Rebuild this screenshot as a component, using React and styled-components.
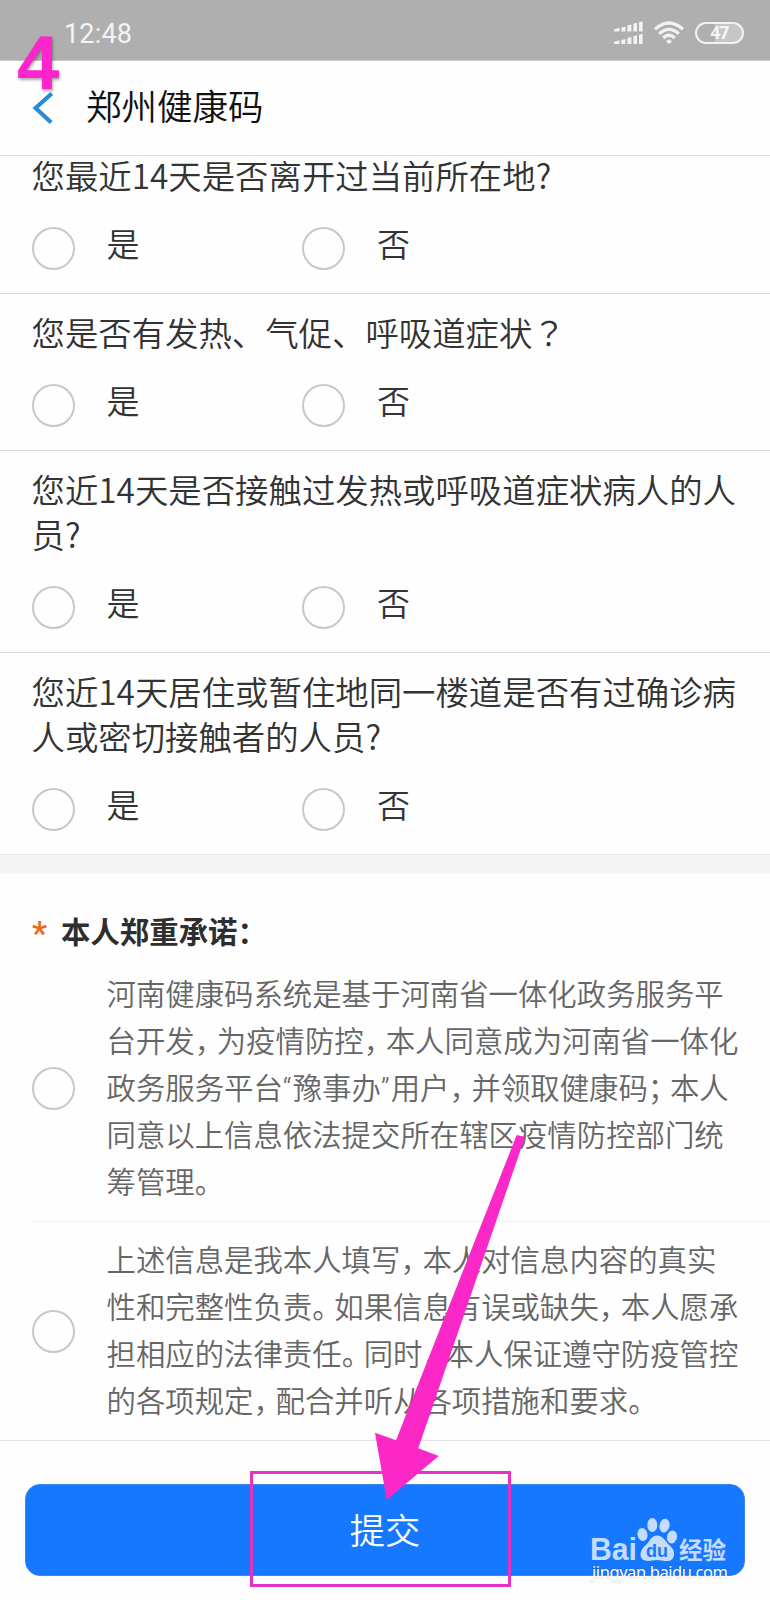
import React from "react";
import styled, { createGlobalStyle } from "styled-components";

const GlobalStyle = createGlobalStyle`
  * {
    box-sizing: border-box;
  }
  body {
    margin: 0;
    background: #fff;
    font-family: "Noto Sans CJK SC", "Noto Sans", sans-serif;
  }
`;

const Screen = styled.div`
  position: relative;
  width: 770px;
  height: 1600px;
  overflow: hidden;
  background: #fefefe;
  display: flex;
  flex-direction: column;
`;

const StatusBar = styled.div`
  position: relative;
  z-index: 2;
  flex: none;
  height: 61px;
  padding: 5px 26px 0 64px;
  display: flex;
  align-items: center;
  justify-content: space-between;
  background: #afafaf;
  border-bottom: 1px solid #c8c8c8;
`;

const Clock = styled.span`
  padding-top: 3px;
  font-family: Roboto, sans-serif;
  font-size: 27px;
  line-height: 30px;
  letter-spacing: 0.2px;
  color: #f4f4f4;
`;

const StatusIcons = styled.div`
  display: flex;
  align-items: center;
  gap: 11px;
`;

const Battery = styled.div`
  width: 49px;
  height: 22px;
  border: 2px solid #f2f2f2;
  border-radius: 11px;
  background: linear-gradient(to right, #afafaf 40%, #c6c6c6 40%);
  color: #f6f6f6;
  font: bold 17px/18px "Open Sans", sans-serif;
  letter-spacing: -0.8px;
  text-align: center;
`;

const Header = styled.header`
  position: relative;
  z-index: 2;
  flex: none;
  height: 95px;
  padding-left: 32px;
  display: flex;
  align-items: center;
  gap: 32px;
  background: #fefefe;
  border-bottom: 1px solid #dedede;
`;

const BackIcon = styled.svg`
  margin-bottom: 1px;
`;

const Title = styled.h1`
  margin: 0;
  padding-bottom: 6px;
  font-size: 35.5px;
  font-weight: 350;
  line-height: 46px;
  color: #111;
`;

/* The list is scrolled a little, its first row starts under the header */
const QuestionList = styled.div`
  flex: none;
  margin-top: -19px;
  border-bottom: 19px solid #f4f4f4;
`;

const Question = styled.section`
  padding: 15px 30px 23px 31.5px;
  border-bottom: 1px solid ${(props) => (props.$last ? "#e8e8e8" : "#d8d8d8")};
`;

const QuestionText = styled.p`
  margin: 0 0 30px;
  font-size: 33.4px;
  font-weight: 350;
  line-height: 45px;
  color: #333;
  white-space: nowrap;
`;

const WideMark = styled.span`
  font-family: "Noto Sans CJK TC", sans-serif;
`;

const Options = styled.div`
  display: flex;
  height: 43px;
`;

const Option = styled.label`
  width: 270.5px;
  display: flex;
  align-items: center;
  gap: 32px;
`;

const Radio = styled.span`
  flex: none;
  width: 43px;
  height: 43px;
  border: 2px solid #c8c8c8;
  border-radius: 50%;
`;

const OptionText = styled.span`
  padding-bottom: 11px;
  font-size: 33px;
  font-weight: 350;
  line-height: 36px;
  color: #333;
`;

const PromiseHeading = styled.h2`
  flex: none;
  display: flex;
  align-items: center;
  gap: 14px;
  height: 40px;
  margin: 36px 0 6px 32px;
  font-size: 29.4px;
  font-weight: bold;
  line-height: 40px;
  color: #2e2e2e;
`;

const Required = styled.span`
  font-family: Roboto, sans-serif;
  font-size: 34px;
  font-weight: 500;
  line-height: 30px;
  padding-top: 6px;
  color: #ec6a1e;
`;

const Pledge = styled.label`
  flex: none;
  display: flex;
  align-items: center;
  gap: 32px;
  height: ${(props) => props.$height}px;
  margin-left: ${(props) => (props.$last ? 0 : 30)}px;
  padding-left: ${(props) => (props.$last ? 31.5 : 1.5)}px;
  border-bottom: 1px solid ${(props) => (props.$last ? "#e4e4e4" : "#f0f0f0")};
`;

const PledgeText = styled.span`
  padding-bottom: 4px;
  font-size: 29.4px;
  font-weight: 350;
  line-height: 47.1px;
  color: #666;
  white-space: nowrap;
`;

const Line = styled.span`
  display: block;
`;

const Stop = styled.span`
  margin-right: 0.25em;
  font-feature-settings: "halt";
`;

const Quote = styled.span`
  padding-right: 1px;
  font-family: Roboto, sans-serif;
  line-height: 1;
`;

const Footer = styled.footer`
  flex: none;
  padding: 43px 25px 0;
`;

const SubmitButton = styled.button`
  display: block;
  width: 720px;
  height: 92px;
  padding: 0 0 2px;
  border: 1px solid #3a86ec;
  border-radius: 15px;
  background: #1677ff;
  color: #fff;
  font-family: inherit;
  font-size: 35.3px;
  font-weight: 350;
  line-height: 86px;
`;

const StepNumber = styled.span`
  position: absolute;
  z-index: 3;
  left: 17px;
  top: 25px;
  font: bold 76px/76px "Liberation Sans", sans-serif;
  color: #ff24cc;
  text-shadow: 1px 2px 3px rgba(0, 0, 0, 0.35);
`;

const Highlight = styled.div`
  position: absolute;
  left: 250px;
  top: 1471px;
  width: 261px;
  height: 116px;
  border: 3px solid #e632c4;
`;

const Arrow = styled.svg`
  position: absolute;
  left: 370px;
  top: 1130px;
`;

const Watermark = styled.svg`
  position: absolute;
  left: 585px;
  top: 1510px;
`;

const questions = [
  { lines: ["您最近14天是否离开过当前所在地?"] },
  { lines: ["您是否有发热、气促、呼吸道症状"], mark: "？" },
  { lines: ["您近14天是否接触过发热或呼吸道症状病人的人", "员?"] },
  { lines: ["您近14天居住或暂住地同一楼道是否有过确诊病", "人或密切接触者的人员?"] },
];

const pledges = [
  {
    height: 266,
    lines: [
      "河南健康码系统是基于河南省一体化政务服务平",
      "台开发，为疫情防控，本人同意成为河南省一体化",
      "政务服务平台“豫事办”用户，并领取健康码；本人",
      "同意以上信息依法提交所在辖区疫情防控部门统",
      "筹管理。",
    ],
  },
  {
    height: 219,
    lines: [
      "上述信息是我本人填写，本人对信息内容的真实",
      "性和完整性负责。如果信息有误或缺失，本人愿承",
      "担相应的法律责任。同时，本人保证遵守防疫管控",
      "的各项规定，配合并听从各项措施和要求。",
    ],
  },
];

// Full-width stops are set tighter than the characters around them
const setPunctuation = (line) =>
  line.split(/([，。；“”])/).map((part, i) => {
    if (/^[，。；]$/.test(part)) return <Stop key={i}>{part}</Stop>;
    if (/^[“”]$/.test(part)) return <Quote key={i}>{part}</Quote>;
    return part;
  });

const SignalIcon = () => (
  <svg width="30" height="24" viewBox="0 0 30 24" fill="#f2f2f2">
    {[0, 12.5].map((y) => (
      <g key={y} transform={`translate(1 ${y})`}>
        <path d="M0 8.2L5.5 6.8V10.5H0z" />
        <path d="M7.4 6.4L11.4 5.4V10.5H7.4z" />
        <path d="M13.4 4.6L17.4 3.6V10.5H13.4z" />
        <path d="M19.4 2.8L23 1.8V10.5H19.4z" />
        <path d="M25 1.2L28.6 0.2V10.5H25z" />
      </g>
    ))}
  </svg>
);

const WifiIcon = () => (
  <svg width="30" height="24" viewBox="0 0 30 24" fill="none" stroke="#f2f2f2" strokeWidth="3.2">
    <path d="M1 8.2Q15 -4.2 29 8.2" />
    <path d="M5.2 12.8Q15 4 24.8 12.8" />
    <path d="M9.2 17Q15 11.6 20.8 17" />
    <path d="M12 20.4Q15 16.6 18 20.4L15 23z" fill="#f2f2f2" stroke="none" />
  </svg>
);

const App = () => {
  return (
    <Screen>
      <GlobalStyle />
      <StatusBar>
        <Clock>12:48</Clock>
        <StatusIcons>
          <SignalIcon />
          <WifiIcon />
          <Battery>47</Battery>
        </StatusIcons>
      </StatusBar>
      <Header>
        <BackIcon width="22" height="32" viewBox="0 0 22 32" fill="none" stroke="#2a8ad6" strokeWidth="4.2">
          <path d="M19.8 1.5L3.6 16L19.2 30.5" />
        </BackIcon>
        <Title>郑州健康码</Title>
      </Header>

      <QuestionList>
        {questions.map((question, i) => (
          <Question key={i} $last={i === questions.length - 1}>
            <QuestionText>
              {question.lines.map((line) => (
                <Line key={line}>
                  {line}
                  {question.mark && <WideMark>{question.mark}</WideMark>}
                </Line>
              ))}
            </QuestionText>
            <Options>
              <Option>
                <Radio />
                <OptionText>是</OptionText>
              </Option>
              <Option>
                <Radio />
                <OptionText>否</OptionText>
              </Option>
            </Options>
          </Question>
        ))}
      </QuestionList>

      <PromiseHeading>
        <Required>*</Required>
        本人郑重承诺：
      </PromiseHeading>
      {pledges.map((pledge, i) => (
        <Pledge key={i} $height={pledge.height} $last={i === pledges.length - 1}>
          <Radio />
          <PledgeText>
            {pledge.lines.map((line) => (
              <Line key={line}>{setPunctuation(line)}</Line>
            ))}
          </PledgeText>
        </Pledge>
      ))}

      <Footer>
        <SubmitButton>提交</SubmitButton>
      </Footer>

      <Highlight />
      <Arrow width="160" height="375" viewBox="370 1130 160 375">
        <path
          d="M516.7 1135L525 1137L418.3 1448.3L438.7 1456L386.7 1500L375 1432.7L396 1440.3z"
          fill="#fb27c6"
        />
      </Arrow>
      <StepNumber>4</StepNumber>
      <Watermark width="160" height="80" viewBox="585 1510 160 80" fill="#c5dcff">
        <text x="590" y="1560" fontFamily="Liberation Sans" fontWeight="bold" fontSize="31" textLength="47" lengthAdjust="spacingAndGlyphs">
          Bai
        </text>
        <ellipse cx="642.5" cy="1534.5" rx="5" ry="6.5" transform="rotate(-12 642.5 1534.5)" />
        <ellipse cx="652.3" cy="1525" rx="5" ry="7" />
        <ellipse cx="664.5" cy="1525.7" rx="5" ry="7" transform="rotate(12 664.5 1525.7)" />
        <ellipse cx="672" cy="1537" rx="5" ry="6.5" transform="rotate(12 672 1537)" />
        <path d="M657 1535.5C662 1535.5 665 1540 668 1544C672 1547.5 674.5 1550 674 1555C673 1562 667 1561.5 662 1560.5Q657 1559.5 652 1560.5C647 1561.5 641 1561 640.5 1555C640.5 1550 643 1547.5 647 1544C650 1540 652 1535.5 657 1535.5z" />
        <text x="646" y="1557" fontFamily="Liberation Sans" fontWeight="bold" fontSize="18" textLength="22" fill="#1677ff">
          du
        </text>
        <text x="679" y="1559" fontFamily="Noto Sans CJK SC" fontWeight="bold" fontSize="23.5">
          经验
        </text>
        <text
          x="592"
          y="1578"
          fontFamily="Noto Sans"
          fontSize="16.5"
          textLength="136"
          fill="#fff"
          stroke="#000"
          strokeOpacity="0.12"
          strokeWidth="1.5"
          paintOrder="stroke"
        >
          jingyan.baidu.com
        </text>
      </Watermark>
    </Screen>
  );
};

export default App;
